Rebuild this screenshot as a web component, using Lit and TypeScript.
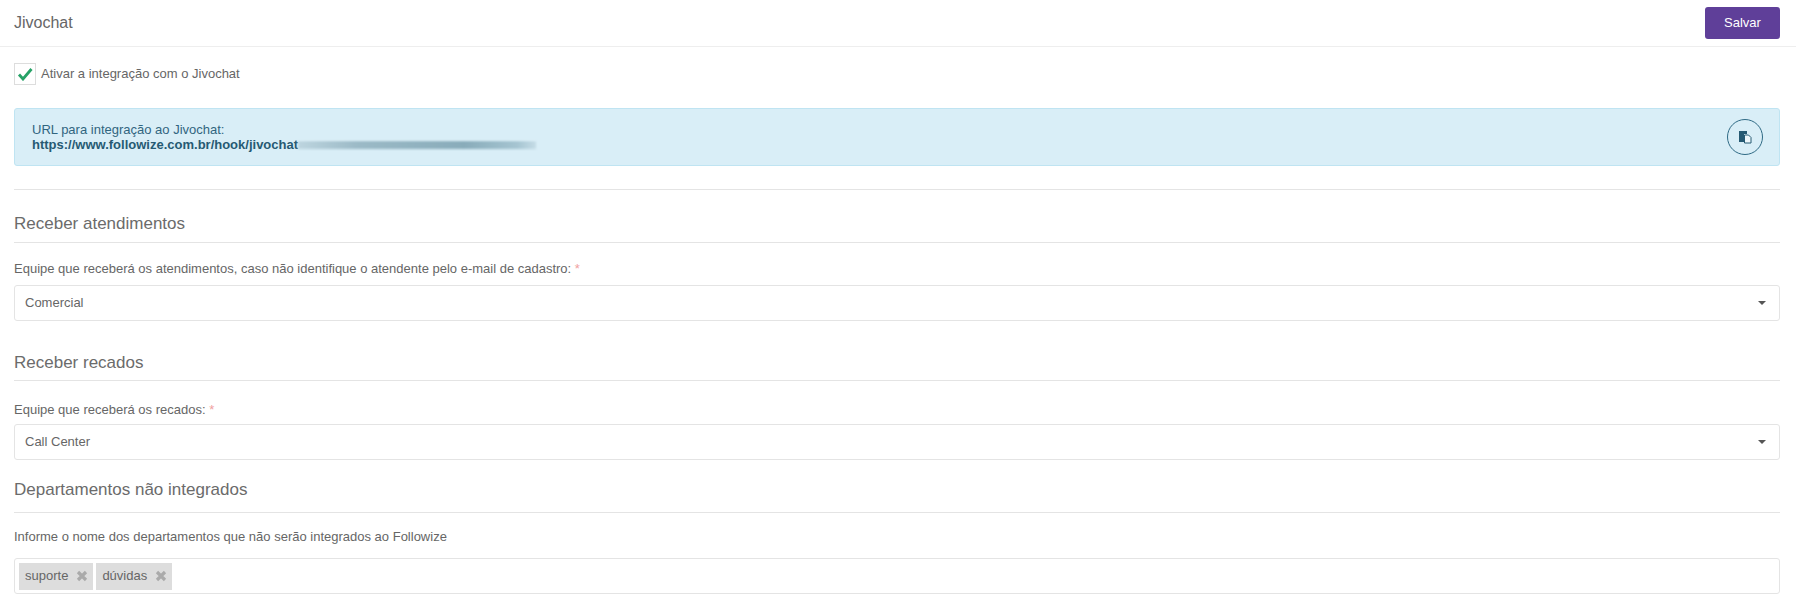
import { LitElement, html, css } from "lit";
import { customElement } from "lit/decorators.js";

@customElement("app-root")
export class AppRoot extends LitElement {
  static styles = css`
    :host { display: block; font-family: "Liberation Sans", Arial, sans-serif; font-size: 13px; color: #666; background: #fff; height: 608px; overflow: hidden; }
    * { box-sizing: border-box; }
    .top { height: 47px; border-bottom: 1px solid #eee; display: flex; align-items: center; justify-content: space-between; padding: 0 16px 0 14px; }
    .title { font-size: 16px; color: #666; }
    .save { width: 75px; height: 32px; background: #5f3f99; color: #fff; border: 0; border-radius: 3px; font: 13px "Liberation Sans", Arial, sans-serif; margin-top: -1px; }
    .body { padding: 16px 16px 0 14px; }
    .check { display: flex; align-items: center; gap: 5px; height: 22px; }
    .check-text { padding-bottom: 2px; }
    .box { width: 22px; height: 22px; border: 1px solid #ddd; display: flex; align-items: center; justify-content: center; }
    .alert { margin-top: 23px; height: 58px; background: #d9eef7; border: 1px solid #bfe4f2; border-radius: 3px; color: #31657f; padding: 10px 16px 10px 17px; display: flex; justify-content: space-between; align-items: center; }
    .alert .lines { line-height: 15px; }
    .url { display: flex; align-items: center; font-weight: 700; color: #265a73; }
    .blur { width: 238px; height: 8px; background: repeating-linear-gradient(180deg, rgba(255,255,255,.25) 0 1px, rgba(60,110,130,.15) 1px 3px), linear-gradient(90deg, #c6dde7, #9dbcc9 25%, #86abba 70%, #a9c9d6 92%, #d0e6f0); filter: blur(1px); }
    .copy { width: 36px; height: 36px; border: 1px solid #2f6a85; border-radius: 50%; display: flex; align-items: center; justify-content: center; }
    hr { border: 0; border-top: 1px solid #e4e4e4; margin: 23px 0 0; }
    h4 { font-size: 17px; font-weight: 400; color: #6b6b6b; margin: 0; border-bottom: 1px solid #e4e4e4; line-height: 18px; }
    .h1 { margin-top: 25px; padding-bottom: 9px; }
    .h2 { margin-top: 33px; padding-bottom: 8px; }
    .h3 { margin-top: 21px; padding-bottom: 13px; }
    label { display: block; line-height: 14px; }
    .req { color: #f0a0a0; }
    .l1 { margin-top: 19px; }
    .l2 { margin-top: 22px; }
    .l3 { margin-top: 17px; }
    .select { height: 36px; border: 1px solid #e4e4e4; border-radius: 3px; display: flex; align-items: center; justify-content: space-between; padding: 0 13px 0 10px; }
    .select-text { padding-bottom: 2px; }
    .s1 { margin-top: 9px; }
    .s2 { margin-top: 7px; }
    .caret { width: 0; height: 0; border: 4px solid transparent; border-top-color: #555; border-bottom-width: 0; }
    .tags { height: 36px; border: 1px solid #e4e4e4; border-radius: 3px; margin-top: 14px; display: flex; align-items: center; gap: 3px; padding: 0 4px; }
    .tag { height: 27px; background: #ddd; display: flex; align-items: center; gap: 8px; padding: 0 5px 0 6px; color: #666; }
    .tag-text { padding-bottom: 2px; }
  `;

  render() {
    const x = html`<svg width="12" height="12" viewBox="0 0 12 12"><path d="M2 2l8 8M10 2l-8 8" stroke="#aaa" stroke-width="3.2" fill="none"/></svg>`;
    return html`
      <div class="top">
        <span class="title">Jivochat</span>
        <button class="save">Salvar</button>
      </div>
      <div class="body">
        <div class="check">
          <span class="box"><svg width="16" height="14" viewBox="0 0 16 14"><path d="M2 7.5l4 4.5L14.5 2" stroke="#27a267" stroke-width="2.8" fill="none"/></svg></span>
          <span class="check-text">Ativar a integração com o Jivochat</span>
        </div>
        <div class="alert">
          <div class="lines">
            <div>URL para integração ao Jivochat:</div>
            <div class="url"><span>https://www.followize.com.br/hook/jivochat</span><span class="blur"></span></div>
          </div>
          <span class="copy"><svg width="14" height="14" viewBox="0 0 14 14"><path d="M1 1h8v3H6v8H1z" fill="#265a73"/><path d="M6.5 5h4l2.5 2.5V13H6.5z" fill="#eef7fb" stroke="#265a73"/></svg></span>
        </div>
        <hr />
        <h4 class="h1">Receber atendimentos</h4>
        <label class="l1">Equipe que receberá os atendimentos, caso não identifique o atendente pelo e-mail de cadastro: <span class="req">*</span></label>
        <div class="select s1"><span class="select-text">Comercial</span><span class="caret"></span></div>
        <h4 class="h2">Receber recados</h4>
        <label class="l2">Equipe que receberá os recados: <span class="req">*</span></label>
        <div class="select s2"><span class="select-text">Call Center</span><span class="caret"></span></div>
        <h4 class="h3">Departamentos não integrados</h4>
        <label class="l3">Informe o nome dos departamentos que não serão integrados ao Followize</label>
        <div class="tags">
          <span class="tag"><span class="tag-text">suporte</span>${x}</span>
          <span class="tag"><span class="tag-text">dúvidas</span>${x}</span>
        </div>
      </div>
    `;
  }
}
